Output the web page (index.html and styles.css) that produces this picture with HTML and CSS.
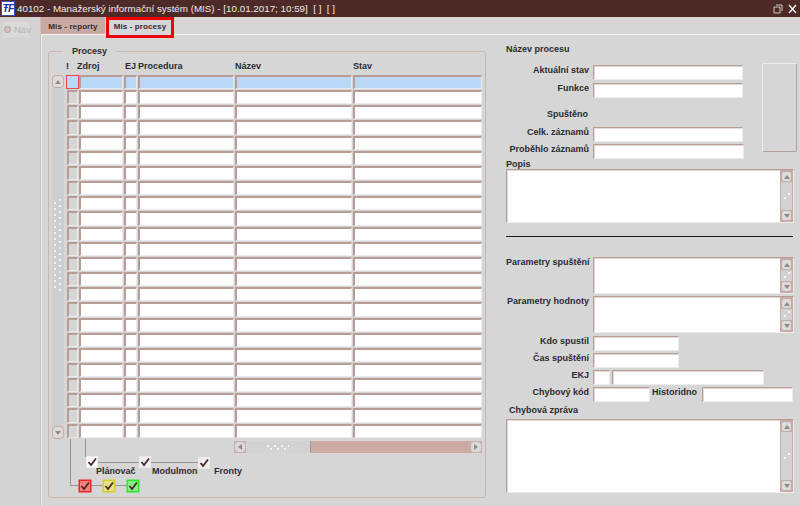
FILE: index.html
```html
<!DOCTYPE html>
<html lang="cs">
<head>
<meta charset="utf-8">
<title>MIS</title>
<link rel="stylesheet" href="styles.css">
</head>
<body>
<header class="titlebar">
  <span class="appicon">ŦF</span>
  <span class="title">40102 - Manažerský informační systém (MIS) - [10.01.2017; 10:59]&nbsp; [ ]&nbsp; [ ]</span>
  <svg class="winbtn" width="24" height="10" viewBox="0 0 24 10"><path d="M3 1h6v6M1 3h6v6H1z" fill="none" stroke="#cfc6c4"/><path d="M16 1l7 8M23 1l-7 8" stroke="#fff" stroke-width="1.2"/></svg>
</header>
<div class="main">
  <nav class="navcol"><div class="navbtn"><span class="radio"></span>Nav</div></nav>
  <div class="workspace">
    <div class="tabs">
      <div class="tab">Mis - reporty</div>
      <div class="tab active">Mis - procesy</div>
    </div>
    <div class="canvas">
      <section class="group">
        <div class="legend">Procesy</div>
        <div class="tablewrap">
          <div class="vscroll">
            <div class="sbtn"><span class="arrow up"></span></div>
            <div class="vthumb"><div class="grip"></div></div>
            <div class="sbtn"><span class="arrow down"></span></div>
          </div>
          <div class="table">
            <div class="row head"><span class="h-mark">!</span><span class="h-zdroj">Zdroj</span><span class="h-ej">EJ</span><span>Procedura</span><span>Název</span><span>Stav</span></div>
            <div class="row sel"><i class="mk cur"></i><i></i><i></i><i></i><i></i><i></i></div>
            <div class="row"><i class="mk"></i><i></i><i></i><i></i><i></i><i></i></div>
            <div class="row"><i class="mk"></i><i></i><i></i><i></i><i></i><i></i></div>
            <div class="row"><i class="mk"></i><i></i><i></i><i></i><i></i><i></i></div>
            <div class="row"><i class="mk"></i><i></i><i></i><i></i><i></i><i></i></div>
            <div class="row"><i class="mk"></i><i></i><i></i><i></i><i></i><i></i></div>
            <div class="row"><i class="mk"></i><i></i><i></i><i></i><i></i><i></i></div>
            <div class="row"><i class="mk"></i><i></i><i></i><i></i><i></i><i></i></div>
            <div class="row"><i class="mk"></i><i></i><i></i><i></i><i></i><i></i></div>
            <div class="row"><i class="mk"></i><i></i><i></i><i></i><i></i><i></i></div>
            <div class="row"><i class="mk"></i><i></i><i></i><i></i><i></i><i></i></div>
            <div class="row"><i class="mk"></i><i></i><i></i><i></i><i></i><i></i></div>
            <div class="row"><i class="mk"></i><i></i><i></i><i></i><i></i><i></i></div>
            <div class="row"><i class="mk"></i><i></i><i></i><i></i><i></i><i></i></div>
            <div class="row"><i class="mk"></i><i></i><i></i><i></i><i></i><i></i></div>
            <div class="row"><i class="mk"></i><i></i><i></i><i></i><i></i><i></i></div>
            <div class="row"><i class="mk"></i><i></i><i></i><i></i><i></i><i></i></div>
            <div class="row"><i class="mk"></i><i></i><i></i><i></i><i></i><i></i></div>
            <div class="row"><i class="mk"></i><i></i><i></i><i></i><i></i><i></i></div>
            <div class="row"><i class="mk"></i><i></i><i></i><i></i><i></i><i></i></div>
            <div class="row"><i class="mk"></i><i></i><i></i><i></i><i></i><i></i></div>
            <div class="row"><i class="mk"></i><i></i><i></i><i></i><i></i><i></i></div>
            <div class="row"><i class="mk"></i><i></i><i></i><i></i><i></i><i></i></div>
            <div class="row"><i class="mk"></i><i></i><i></i><i></i><i></i><i></i></div>
          </div>
        </div>
        <div class="hscroll">
          <div class="hbtn"><span class="arrow left"></span></div>
          <div class="hthumb"><div class="hgrip"></div></div>
          <div class="htrack"></div>
          <div class="hbtn"><span class="arrow right"></span></div>
        </div>
        <div class="diagram">
          <span class="wire w1"></span><span class="wire w2"></span><span class="wire w3"></span><span class="wire w4"></span><span class="wire w5"></span>
          <span class="chk c1"><svg viewBox="0 0 10 10"><path d="M1.5 5l2.5 3 5-6.5"/></svg></span>
          <span class="chk c2"><svg viewBox="0 0 10 10"><path d="M1.5 5l2.5 3 5-6.5"/></svg></span>
          <span class="chk c3"><svg viewBox="0 0 10 10"><path d="M1.5 5l2.5 3 5-6.5"/></svg></span>
          <span class="chk c4 red"><svg viewBox="0 0 10 10"><path d="M1.5 5l2.5 3 5-6.5"/></svg></span>
          <span class="chk c5 yellow"><svg viewBox="0 0 10 10"><path d="M1.5 5l2.5 3 5-6.5"/></svg></span>
          <span class="chk c6 green"><svg viewBox="0 0 10 10"><path d="M1.5 5l2.5 3 5-6.5"/></svg></span>
          <span class="dlabel l1">Plánovač</span>
          <span class="dlabel l2">Modulmon</span>
          <span class="dlabel l3">Fronty</span>
        </div>
      </section>
      <aside class="detail">
        <div class="sidebtn"></div>
        <div class="lbl name">Název procesu</div>
        <div class="frow r-stav"><label>Aktuální stav</label><span class="fld w150"></span></div>
        <div class="frow r-fun"><label>Funkce</label><span class="fld w150"></span></div>
        <div class="frow r-spu"><label class="sp">Spuštěno</label></div>
        <div class="frow r-cel"><label>Celk. záznamů</label><span class="fld w150"></span></div>
        <div class="frow r-pro"><label>Proběhlo záznamů</label><span class="fld w151"></span></div>
        <div class="lbl popis">Popis</div>
        <div class="area a-popis"><div class="tarea"></div><div class="ascroll"><div class="sbtn"><span class="arrow up"></span></div><div class="athumb"><div class="agrip"></div></div><div class="sbtn"><span class="arrow down"></span></div></div></div>
        <hr class="rule">
        <div class="frow r-par1"><label class="top">Parametry spuštění</label><div class="area a-par"><div class="tarea"></div><div class="ascroll"><div class="sbtn"><span class="arrow up"></span></div><div class="athumb"><div class="agrip"></div></div><div class="sbtn"><span class="arrow down"></span></div></div></div></div>
        <div class="frow r-par2"><label class="top">Parametry hodnoty</label><div class="area a-par"><div class="tarea"></div><div class="ascroll"><div class="sbtn"><span class="arrow up"></span></div><div class="athumb"><div class="agrip"></div></div><div class="sbtn"><span class="arrow down"></span></div></div></div></div>
        <div class="frow r-kdo"><label>Kdo spustil</label><span class="fld w86"></span></div>
        <div class="frow r-cas"><label>Čas spuštění</label><span class="fld w86"></span></div>
        <div class="frow r-ekj"><label>EKJ</label><span class="fld w17"></span><span class="fld w152"></span></div>
        <div class="frow r-chy"><label>Chybový kód</label><span class="fld w57"></span><label class="hist">Historidno</label><span class="fld w91"></span></div>
        <div class="lbl zprava">Chybová zpráva</div>
        <div class="area a-zpr"><div class="tarea"></div><div class="ascroll"><div class="sbtn"><span class="arrow up"></span></div><div class="athumb"><div class="agrip"></div></div><div class="sbtn"><span class="arrow down"></span></div></div></div>
      </aside>
    </div>
  </div>
</div>
</body>
</html>
```

FILE: styles.css
```css
* { box-sizing: border-box; }
html, body { margin: 0; padding: 0; }
body {
  width: 800px; height: 506px; overflow: hidden;
  background: #d6d6d6; color: #2b2b33;
  font: bold 9px/11px "Liberation Sans", Arial, sans-serif;
  display: flex; flex-direction: column;
}
.titlebar {
  height: 17px; flex: none; background: #4d2a27; color: #efe9e8;
  display: flex; align-items: center; padding: 0 3px 0 1px;
  font: 9.8px/17px "Liberation Sans", sans-serif;
}
.appicon {
  width: 14px; height: 15px; background: #fff; border: 1px solid #3c4fc0;
  color: #2233aa; font: italic bold 10.5px/13px "Liberation Sans", sans-serif;
  text-align: center; letter-spacing: -1px; flex: none; margin-right: 2px; overflow: hidden;
}
.title { flex: 1; white-space: nowrap; }
.winbtn { flex: none; }

.main { flex: 1; display: flex; min-height: 0; }
.navcol { width: 41px; flex: none; background: #d3d3d3; border-right: 1px solid #c9c0be; padding: 5px 0 0 3px; }
.navbtn { width: 26px; height: 15px; padding-left: 1px; display: flex; align-items: center; gap: 3px; background: #dadada; color: #b4b4b4; font: 9.5px/15px "Liberation Sans", sans-serif; }
.radio { width: 7px; height: 7px; border-radius: 50%; border: 1.5px solid #a39c9a; background: #d9c3bf; flex: none; }

.workspace { flex: 1; display: flex; flex-direction: column; min-width: 0; }
.tabs { height: 17px; flex: none; display: flex; gap: 1px; }
.tab {
  width: 64px; height: 17px; background: #c9aaa3; color: #3a2a2a; text-align: center;
  font-size: 8px; line-height: 19px; letter-spacing: .1px;
}
.tab.active { width: 62px; height: 15px; margin: 3px 0 0 3px; background: #d6d6d6; outline: 3px solid #ee0000; line-height: 14px; position: relative; }
.canvas {
  flex: 1; display: flex; border-top: 1px solid #f4f4f4; border-left: 1px solid #efefef;
  padding: 16px 0 0 6px; min-height: 0;
}

.group {
  width: 438px; height: 447px; flex: none; position: relative;
  border: 1px solid #c9b6b1; border-radius: 3px; padding: 10px 0 0 3px;
}
.legend { position: absolute; left: 14px; top: -6px; padding: 0 9px; background: #d6d6d6; line-height: 11px; font-size: 9px; }
.tablewrap { display: flex; gap: 3px; }
.vscroll { width: 12px; height: 364px; margin-top: 13px; display: flex; flex-direction: column; background: #d0d0d0; flex: none; }
.sbtn { height: 13px; flex: none; background: #dcdcdc; border: 1px solid #c5aba5; border-radius: 4px; display: flex; align-items: center; justify-content: center; }
.vthumb { flex: 1; background: #cecece; display: flex; align-items: center; padding-bottom: 24px; }
.grip {
  width: 100%; height: 92px;
  background-image: repeating-linear-gradient(#f3f3f3 0 2px, transparent 2px 6px), repeating-linear-gradient(#f3f3f3 0 2px, transparent 2px 6px);
  background-size: 2px 100%, 2px 100%;
  background-position: 2px 3px, 7px 0;
  background-repeat: no-repeat;
}
.arrow { width: 0; height: 0; display: block; border-style: solid; border-color: transparent; }
.arrow.up { border-width: 0 3.5px 4px; border-bottom-color: #8f8a89; }
.arrow.down { border-width: 4px 3.5px 0; border-top-color: #8f8a89; }
.arrow.left { border-width: 3.5px 4px 3.5px 0; border-right-color: #8f8a89; }
.arrow.right { border-width: 3.5px 0 3.5px 4px; border-left-color: #8f8a89; }

.table { flex: none; width: 416px; }
.row { display: grid; grid-template-columns: 12px 45px 14px 97px 118px 130px; height: 15.17px; }
.row.head { height: 13px; line-height: 9px; font-size: 9px; }
.h-mark { margin-left: -1px; }
.h-zdroj { margin-left: -2px; }
.h-ej { margin-left: 1px; }
.row i {
  display: block; background: #fff; margin: 0 1px 1px 0;
  border-top: 2px solid #b89d96; border-left: 2px solid #b89d96; border-bottom: 1px solid #ececec; border-right: 1px solid #ececec;
}
.row i.mk { background: #d6d6d6; }
.row.sel i { background: #b9d8f6; }
.row.sel i.cur { border: 1px solid #e54b4b; background: #b9d8f6; margin-right: 0; margin-left: -1px; }

.hscroll { margin: 2px 0 0 182px; width: 248px; height: 12px; display: flex; background: #cbaba4; }
.hbtn { width: 12px; flex: none; background: #dadada; border: 1px solid #c9b0aa; border-radius: 4px; display: flex; align-items: center; justify-content: center; }
.hthumb { width: 65px; flex: none; background: #d2d2d2; border-right: 1px solid #a89a97; display: flex; align-items: center; justify-content: center; }
.hgrip {
  width: 22px; height: 5px;
  background-image: repeating-linear-gradient(90deg, #f6f6f6 0 2px, transparent 2px 7px), repeating-linear-gradient(90deg, #f6f6f6 0 2px, transparent 2px 7px);
  background-size: 100% 2px; background-position: 0 0, 3px 3px; background-repeat: no-repeat;
}
.htrack { flex: 1; }

.diagram { position: relative; height: 48px; }
.wire { position: absolute; background: #969696; }
.w1 { left: 18px; top: -14px; width: 1px; height: 46px; }
.w2 { left: 18px; top: 32px; width: 10px; height: 1px; }
.w3 { left: 33px; top: -14px; width: 1px; height: 18px; }
.w4 { left: 44px; top: 9px; width: 103px; height: 1px; }
.w5 { left: 39px; top: 32px; width: 37px; height: 1px; }
.chk { position: absolute; width: 10px; height: 10px; background: #efefef; display: block; box-shadow: 0 0 0 1px #ece9e8; }
.chk svg { display: block; width: 10px; height: 10px; fill: none; stroke: #4a2a26; stroke-width: 1.8; }
.c1 { left: 35px; top: 4px; background: #fff; }
.c2 { left: 88px; top: 4px; }
.c3 { left: 147px; top: 5px; }
.c4 { left: 28px; top: 28px; background: #f1807c; box-shadow: 0 0 0 1.5px #ee2222; }
.c5 { left: 52px; top: 28px; background: #e6e08a; box-shadow: 0 0 0 1.5px #d6cc22; }
.c6 { left: 76px; top: 28px; background: #8aea8a; box-shadow: 0 0 0 1.5px #22ee22; }
.dlabel { position: absolute; top: 13px; }
.l1 { left: 44px; }
.l2 { left: 100px; }
.l3 { left: 162px; }

.detail { width: 314px; flex: none; position: relative; padding-left: 20px; }
.sidebtn { position: absolute; left: 276px; top: 12px; width: 35px; height: 89px; background: #d6d6d6; border: 1px solid; border-color: #efefef #b0a09c #b0a09c #efefef; border-radius: 2px; }
.lbl { height: 11px; line-height: 11px; }
.name { margin-top: -7px; }
.frow { display: flex; align-items: flex-start; }
.frow label { width: 83px; margin-right: 4px; text-align: right; white-space: nowrap; line-height: 11px; flex: none; }
.fld, .area { background: #fff; flex: none; border-top: 1px solid #b89d96; border-left: 1px solid #b89d96; border-bottom: 1px solid #ececec; border-right: 1px solid #ececec; box-shadow: inset 1px 1px #e2d8d5; }
.fld { display: block; height: 15px; }
.w150 { width: 150px; }
.w151 { width: 151px; }
.w86 { width: 86px; }
.w17 { width: 17px; margin-right: 2px; }
.w152 { width: 152px; }
.w57 { width: 57px; }
.w91 { width: 91px; }
.frow label.hist { width: auto; margin: 0 5px 0 2px; }
.frow label.sp { width: 82px; }
.r-stav { margin-top: 10px; }
.r-fun { margin-top: 3px; }
.r-spu { margin-top: 11px; height: 11px; }
.r-cel { margin-top: 7px; }
.r-pro { margin-top: 2px; }
.popis { margin-top: 0; }
.area { display: flex; }
.tarea { flex: 1; }
.ascroll { width: 13px; padding: 1px; display: flex; flex-direction: column; background: #c9aba3; flex: none; }
.ascroll .sbtn { height: 11px; border-radius: 3px; }
.athumb { flex: 1; min-height: 0; background: #d2d2d2; display: flex; align-items: center; justify-content: center; }
.agrip { width: 6px; height: 7px; background-image: linear-gradient(#f6f6f6, #f6f6f6), linear-gradient(#f6f6f6, #f6f6f6); background-size: 2px 2px; background-position: 4px 0, 0 4px; background-repeat: no-repeat; }
.a-popis { width: 288px; height: 54px; margin-top: -1px; }
.rule { border: 0; border-top: 1px solid #1d1d1d; width: 287px; height: 1px; margin: 13px 0 20px; }
.a-par { width: 201px; height: 37px; }
.a-zpr { width: 288px; height: 74px; margin-top: 3px; }
.r-par2 { margin-top: 2px; }
.r-kdo { margin-top: 3px; }
.r-cas { margin-top: 2px; }
.r-ekj { margin-top: 2px; }
.r-chy { margin-top: 2px; }
.zprava { margin-top: 3px; padding-left: 3px; }
```
